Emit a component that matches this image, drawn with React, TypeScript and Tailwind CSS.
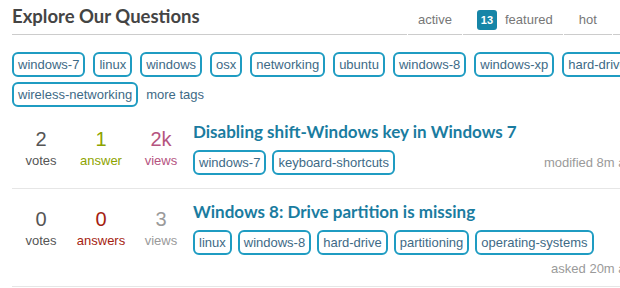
import React from "react";

const topTags = [
  "windows-7",
  "linux",
  "windows",
  "osx",
  "networking",
  "ubuntu",
  "windows-8",
  "windows-xp",
  "hard-drive",
  "wireless-networking",
];

type Q = {
  votes: string;
  votesLabel: string;
  answers: string;
  answersLabel: string;
  answersColor: string;
  views: string;
  viewsColor: string;
  title: string;
  tags: string[];
  meta: string;
};

const questions: Q[] = [
  {
    votes: "2",
    votesLabel: "votes",
    answers: "1",
    answersLabel: "answer",
    answersColor: "text-[#8ea300]",
    views: "2k",
    viewsColor: "text-[#b5547f]",
    title: "Disabling shift-Windows key in Windows 7",
    tags: ["windows-7", "keyboard-shortcuts"],
    meta: "modified 8m ago",
  },
  {
    votes: "0",
    votesLabel: "votes",
    answers: "0",
    answersLabel: "answers",
    answersColor: "text-[#a51d10]",
    views: "3",
    viewsColor: "text-[#9a9a9a]",
    title: "Windows 8: Drive partition is missing",
    tags: ["linux", "windows-8", "hard-drive", "partitioning", "operating-systems"],
    meta: "asked 20m ago",
  },
];

function Tag({ name }: { name: string }) {
  return (
    <span className="flex h-[25px] items-center rounded-[6px] border-2 border-[#1f9cc2] px-[4px] text-[13px] leading-[17px] text-[#3e6a86] whitespace-nowrap">
      {name}
    </span>
  );
}

export default function App() {
  return (
    <div className="h-[288px] w-[620px] overflow-hidden bg-white font-['Liberation_Sans',Arial,sans-serif]">
      <div className="ml-[12px] w-[628px]">
        {/* Header */}
        <div className="flex w-[700px] items-stretch gap-px">
          <div className="flex h-[35px] w-[395px] items-center border-b border-[#cccccc] pb-[2px]">
            <h1 className="font-['Lato',sans-serif] text-[18.5px] font-bold leading-[22px] text-[#444444]">
              Explore Our Questions
            </h1>
          </div>
          <div className="flex h-[35px] items-center border-b border-[#cccccc] px-[10px] pt-[6px] text-[13px] text-[#777777]">
            active
          </div>
          <div className="flex h-[35px] items-center border-b border-[#cccccc] pl-[14px] pr-[10px] pt-[6px] text-[13px] text-[#777777]">
            <span className="mr-[8px] flex h-[20px] w-[20px] items-center justify-center rounded-[3px] bg-[#1685a7] text-[11px] font-bold text-white">
              13
            </span>
            featured
          </div>
          <div className="flex h-[35px] items-center border-b border-[#cccccc] px-[15px] pt-[6px] text-[13px] text-[#777777]">
            hot
          </div>
          <div className="flex h-[35px] items-center border-b border-[#cccccc] px-[15px] pt-[6px] text-[13px] text-[#777777]">
            week
          </div>
        </div>

        {/* Top tags */}
        <div className="mt-[17px] flex flex-wrap items-center gap-x-[8px] gap-y-[5px]">
          {topTags.map((t) => (
            <Tag key={t} name={t} />
          ))}
          <span className="text-[13px] leading-[17px] text-[#3e6a86]">more tags</span>
        </div>

        {/* Questions */}
        <div className="mt-[2px]">
          {questions.map((q) => (
            <div
              key={q.title}
              className="flex min-h-[80px] border-b border-[#e6e6e6] pb-[9px] pt-[12px]"
            >
              <div className="-ml-px flex pt-[6px]">
                <div className="flex w-[60px] flex-col items-center">
                  <div className="text-[20px] leading-[24px] text-[#555555]">{q.votes}</div>
                  <div className="mt-[2px] text-[13px] leading-[16px] text-[#555555]">{q.votesLabel}</div>
                </div>
                <div className="flex w-[60px] flex-col items-center">
                  <div className={`text-[20px] leading-[24px] ${q.answersColor}`}>{q.answers}</div>
                  <div className={`mt-[2px] text-[13px] leading-[16px] ${q.answersColor}`}>{q.answersLabel}</div>
                </div>
                <div className="flex w-[60px] flex-col items-center">
                  <div className={`text-[20px] leading-[24px] ${q.viewsColor}`}>{q.views}</div>
                  <div className={`mt-[2px] text-[13px] leading-[16px] ${q.viewsColor}`}>views</div>
                </div>
              </div>
              <div className="ml-[2px] min-w-0 flex-1">
                <div className="font-['Lato',sans-serif] text-[17px] font-bold leading-[22px] text-[#1a7ca0]">
                  {q.title}
                </div>
                <div className="mt-[7px] flex flex-wrap items-center gap-x-[6px] gap-y-[6px]">
                  {q.tags.map((t) => (
                    <Tag key={t} name={t} />
                  ))}
                  <span className="ml-auto text-[13px] leading-[16px] text-[#9a9a9a] whitespace-nowrap">
                    {q.meta}
                  </span>
                </div>
              </div>
            </div>
          ))}
        </div>
      </div>
    </div>
  );
}
